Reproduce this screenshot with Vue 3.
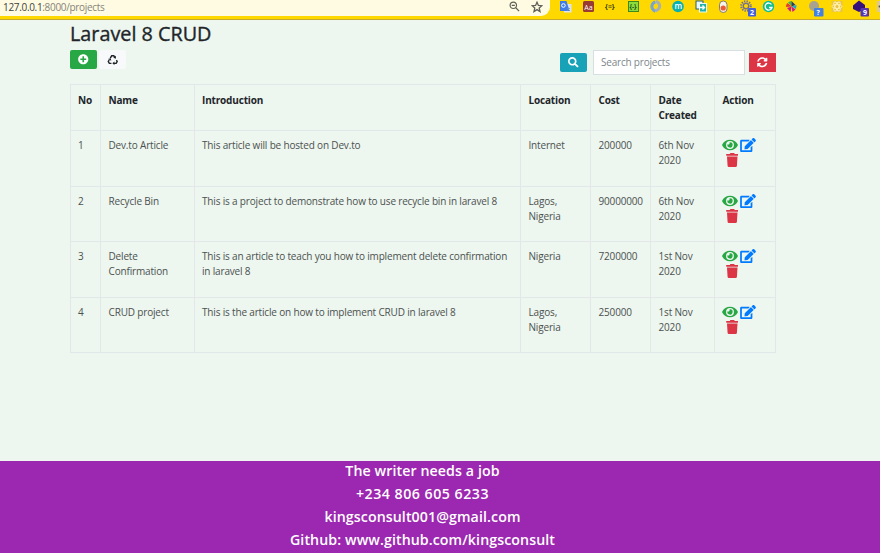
<script setup>
const columns = ['No', 'Name', 'Introduction', 'Location', 'Cost', 'Date Created', 'Action']
const projects = [
  { id: 1, name: 'Dev.to Article', intro: 'This article will be hosted on Dev.to', location: 'Internet', cost: '200000', date: '6th Nov 2020' },
  { id: 2, name: 'Recycle Bin', intro: 'This is a project to demonstrate how to use recycle bin in laravel 8', location: 'Lagos, Nigeria', cost: '90000000', date: '6th Nov 2020' },
  { id: 3, name: 'Delete Confirmation', intro: 'This is an article to teach you how to implement delete confirmation in laravel 8', location: 'Nigeria', cost: '7200000', date: '1st Nov 2020' },
  { id: 4, name: 'CRUD project', intro: 'This is the article on how to implement CRUD in laravel 8', location: 'Lagos, Nigeria', cost: '250000', date: '1st Nov 2020' },
]
</script>

<template>
  <div class="page">
    <header class="browser">
      <div class="address">
        <span class="url">127.0.0.1<span class="path">:8000/projects</span></span>
        <svg class="zoom" viewBox="0 0 12 12"><circle cx="4.7" cy="4.7" r="3.5" /><path d="M7.4 7.4L11 11M3 4.7h3.4" /></svg>
        <svg class="star" viewBox="0 0 12 12"><path d="M6 1.200l1.400 3.200 3.500.3-2.700 2.300.8 3.500-3-1.900-3 1.900.8-3.500L1.100 4.700l3.500-.3z" /></svg>
      </div>
      <svg class="extensions" viewBox="0 0 330 19">
        <g>
          <rect x="14" y="4" width="7.500" height="8.500" fill="#dce3ea" />
          <path d="M10 1h6.500l3 10H10z" fill="#3f7eea" />
          <circle cx="13.400" cy="5.500" r="1.800" fill="none" stroke="#fff" />
          <path d="M17 8l3 3M20 8l-3 3" stroke="#6f8fad" stroke-width=".8" />
        </g>
        <rect x="33" y="1" width="11" height="11" rx="1.500" fill="#983b32" />
        <text x="34.300" y="9.500" class="glyph" fill="#fff">Aa</text>
        <text x="55" y="9" class="glyph bold" fill="#333b00">{≡}</text>
        <rect x="78.500" y="1.500" width="10" height="10" fill="#8ddc3a" stroke="#3a8a20" />
        <text x="79.400" y="9.300" class="glyph bold small" fill="#20551c">{-}</text>
        <path d="M105.500 2a4.600 4.600 0 0 0-2 8l2 1.500" fill="none" stroke="#78a4d0" stroke-width="3" />
        <path d="M106 1.500a4.600 4.600 0 0 1 2 8l-2.500 1.500" fill="none" stroke="#a6b0b2" stroke-width="3" />
        <circle cx="128" cy="6.500" r="5.800" fill="#08b1b0" />
        <text x="124.600" y="9" class="glyph m" fill="#fff">m</text>
        <g>
          <rect x="146" y="1" width="7" height="8" fill="#e9f7f5" stroke="#285e68" />
          <rect x="149.500" y="3.500" width="7" height="8.500" fill="#20b2aa" stroke="#e9f7f5" />
          <path d="M149 7.500h5M152.500 5.500l2 2-2 2" fill="none" stroke="#fff" stroke-width="1.400" />
        </g>
        <rect x="169.500" y="1" width="7.500" height="11.500" rx="3.700" fill="#f5f5ec" stroke="#867c68" />
        <circle cx="173.200" cy="8" r="2.600" fill="#ed5a36" />
        <circle cx="196" cy="6" r="2.700" fill="none" stroke="#74708f" stroke-width="1.300" />
        <circle cx="196" cy="6" r="4.700" fill="none" stroke="#74708f" stroke-width="2.200" stroke-dasharray="1.300 1.160" />
        <rect x="198" y="8" width="8" height="8.500" rx="1" fill="#4361da" />
        <text x="200.100" y="15" class="badge">2</text>
        <circle cx="218.500" cy="6.500" r="5.700" fill="#14be91" />
        <path d="M221.500 4.500a3.500 3.500 0 1 0 .5 3h-3" fill="none" stroke="#fff" stroke-width="1.300" />
        <g>
          <path d="M241.500 6.500V1a5 5 0 0 0-3.500 1.500z" fill="#44b34d" />
          <path d="M241.500 6.500l-4-3.500a5 5 0 0 0-1.500 4z" fill="#e9362f" />
          <path d="M241.500 6.500l-4.500 1.500 3.500 4z" fill="#cf178c" />
          <path d="M241.500 6.500V1l4 4z" fill="#303a63" />
          <path d="M241.500 6.500l5-1.500-.5 4z" fill="#20a7ce" />
          <path d="M241.500 6.500l4 3-3 2.500z" fill="#cf178c" />
        </g>
        <circle cx="264" cy="6" r="5" fill="#a8a28e" />
        <rect x="264" y="8" width="9.500" height="8.500" rx="1" fill="#4381dc" />
        <text x="266.600" y="15" class="badge">?</text>
        <g fill="none" stroke="#fff3b0" stroke-width=".9">
          <rect x="281.500" y="1" width="11" height="11" fill="#e9c447" stroke="none" />
          <ellipse cx="287" cy="6.500" rx="5" ry="2" />
          <ellipse cx="287" cy="6.500" rx="5" ry="2" transform="rotate(60 287 6.500)" />
          <ellipse cx="287" cy="6.500" rx="5" ry="2" transform="rotate(120 287 6.500)" />
        </g>
        <path d="M303 5.500l6-5 6 4.500v4l-6 3-6-3z" fill="#36107c" />
        <rect x="310.500" y="8" width="8.500" height="8.500" rx="1" fill="#5735ae" />
        <text x="313" y="15" class="badge">9</text>
        <rect x="327" y="1" width="5" height="11" fill="#ddc79c" />
        <circle cx="329.500" cy="6.500" r="1" fill="#554" />
      </svg>
    </header>

    <main class="container">
      <h2>Laravel 8 CRUD</h2>
      <div class="toolbar">
        <button class="btn green" aria-label="Add">
          <svg viewBox="0 0 512 512"><path d="M256 8C119 8 8 119 8 256s111 248 248 248 248-111 248-248S393 8 256 8zm144 276c0 6.600-5.400 12-12 12h-92v92c0 6.600-5.400 12-12 12h-56c-6.600 0-12-5.400-12-12v-92h-92c-6.600 0-12-5.400-12-12v-56c0-6.600 5.400-12 12-12h92v-92c0-6.600 5.400-12 12-12h56c6.600 0 12 5.400 12 12v92h92c6.600 0 12 5.400 12 12v56z" /></svg>
        </button>
        <button class="btn light" aria-label="Recycle">
          <svg class="recycle" viewBox="0 0 24 24">
            <path d="M6.800 8.500L9.800 3.700h4.400l2 3.200M19.600 12.800l1.700 2.900-2.200 3.800h-4.600M9.300 19.500H4.900l-2.200-3.800 1.800-3.200" />
            <path class="tip" d="M18.600 3.600v6.200l-5.400-1.800zM15.500 15.800v7.400l-4.400-3.700zM2 10.400l5.700-1.600 1.300 5.400z" />
          </svg>
        </button>
        <span class="spacer"></span>
        <button class="btn teal" aria-label="Search">
          <svg viewBox="0 0 512 512"><path d="M505 442.700L405.300 343c-4.500-4.500-10.600-7-17-7H372c27.600-35.300 44-79.700 44-128C416 93.100 322.900 0 208 0S0 93.100 0 208s93.100 208 208 208c48.300 0 92.700-16.400 128-44v16.300c0 6.400 2.500 12.500 7 17l99.700 99.700c9.400 9.400 24.600 9.400 33.900 0l28.300-28.300c9.400-9.400 9.400-24.600.1-34zM208 336c-70.700 0-128-57.200-128-128 0-70.700 57.200-128 128-128 70.700 0 128 57.200 128 128 0 70.700-57.200 128-128 128z" /></svg>
        </button>
        <input type="text" placeholder="Search projects" />
        <button class="btn red" aria-label="Refresh">
          <svg viewBox="0 0 512 512"><path d="M370.720 133.280C339.458 104.008 298.888 87.962 255.848 88c-77.458.068-144.328 53.178-162.791 126.850-1.344 5.363-6.122 9.150-11.651 9.150H24.103c-7.498 0-13.194-6.807-11.807-14.176C33.933 94.924 134.813 8 256 8c66.448 0 126.791 26.136 171.315 68.685L463.030 40.970C478.149 25.851 504 36.559 504 57.941V192c0 13.255-10.745 24-24 24H345.941c-21.382 0-32.090-25.851-16.971-40.971l41.750-41.749zM32 296h134.059c21.382 0 32.090 25.851 16.971 40.971l-41.750 41.750c31.262 29.273 71.835 45.319 114.876 45.280 77.418-.07 144.315-53.144 162.787-126.849 1.344-5.363 6.122-9.150 11.651-9.150h57.304c7.498 0 13.194 6.807 11.807 14.176C478.067 417.076 377.187 504 256 504c-66.448 0-126.791-26.136-171.315-68.685L48.970 471.030C33.851 486.149 8 475.441 8 454.059V320c0-13.255 10.745-24 24-24z" /></svg>
        </button>
      </div>

      <table>
        <colgroup>
          <col class="c-no" /><col class="c-name" /><col class="c-intro" /><col class="c-loc" /><col class="c-cost" /><col class="c-date" /><col class="c-act" />
        </colgroup>
        <thead>
          <tr><th v-for="c in columns" :key="c">{{ c }}</th></tr>
        </thead>
        <tbody>
          <tr v-for="p in projects" :key="p.id">
            <td>{{ p.id }}</td>
            <td>{{ p.name }}</td>
            <td>{{ p.intro }}</td>
            <td>{{ p.location }}</td>
            <td>{{ p.cost }}</td>
            <td>{{ p.date }}</td>
            <td>
              <div class="actions">
                <svg class="eye" viewBox="0 0 576 512"><path d="M572.520 241.400C518.290 135.590 410.930 64 288 64S57.680 135.640 3.480 241.410a32.350 32.350 0 0 0 0 29.190C57.710 376.410 165.070 448 288 448s230.320-71.640 284.520-177.410a32.350 32.350 0 0 0 0-29.190zM288 400a144 144 0 1 1 144-144 143.930 143.930 0 0 1-144 144zm0-240a95.310 95.310 0 0 0-25.310 3.790 47.850 47.850 0 0 1-66.900 66.900A95.780 95.780 0 1 0 288 160z" /></svg>
                <svg class="edit" viewBox="0 0 576 512"><path d="M402.600 83.200l90.200 90.200c3.800 3.800 3.800 10 0 13.800L274.400 405.600l-92.800 10.300c-12.400 1.400-22.900-9.100-21.500-21.500l10.300-92.800L388.800 83.200c3.800-3.800 10-3.800 13.800 0zm162-22.900l-48.800-48.800c-15.200-15.200-39.900-15.200-55.200 0l-35.400 35.400c-3.800 3.800-3.800 10 0 13.800l90.200 90.200c3.800 3.800 10 3.800 13.800 0l35.400-35.400c15.200-15.300 15.200-40 0-55.200zM384 346.200V448H64V128h229.800c3.200 0 6.200-1.300 8.500-3.500l40-40c7.600-7.600 2.200-20.500-8.500-20.500H48C21.500 64 0 85.500 0 112v352c0 26.500 21.500 48 48 48h352c26.500 0 48-21.500 48-48V306.200c0-10.700-12.900-16-20.500-8.500l-40 40c-2.200 2.300-3.500 5.300-3.500 8.500z" /></svg>
                <svg class="trash" viewBox="0 0 448 512"><path d="M432 32H312l-9.400-18.700A24 24 0 0 0 281.100 0H166.800a23.720 23.720 0 0 0-21.400 13.300L136 32H16A16 16 0 0 0 0 48v32a16 16 0 0 0 16 16h416a16 16 0 0 0 16-16V48a16 16 0 0 0-16-16zM53.200 467a48 48 0 0 0 47.900 45h245.800a48 48 0 0 0 47.900-45L416 128H32z" /></svg>
              </div>
            </td>
          </tr>
        </tbody>
      </table>
    </main>

    <footer>
      <p>The writer needs a job</p>
      <p class="phone">+234 806 605 6233</p>
      <p>kingsconsult001@gmail.com</p>
      <p>Github: www.github.com/kingsconsult</p>
    </footer>
  </div>
</template>

<style>
body { margin: 0; overflow: hidden; }
</style>

<style scoped>
* { box-sizing: border-box; }
.page {
  width: 880px; height: 553px; display: flex; flex-direction: column; overflow: hidden;
  background: #edf6ef; color: #212529; font-family: "Open Sans", "Noto Sans", sans-serif; font-size: 10px;
}
.browser { height: 20px; flex: none; display: flex; background: #ffd800; border-bottom: 1px solid #c8a92c; }
.address { width: 550px; height: 16px; display: flex; align-items: center; background: #fffbe2; border-radius: 0 0 9px 0; flex: none; }
.url { width: 509px; padding-left: 3px; font-size: 10px; line-height: 14px; letter-spacing: -.32px; color: #3d3f3c; margin-top: -3px; }
.path { color: #85847a; }
.address svg { fill: none; stroke: #5e6058; stroke-width: 1.300; margin-top: -3px; }
.zoom { width: 11px; height: 11px; }
.star { width: 12px; height: 12px; margin-left: 11px; }
.extensions { width: 330px; height: 19px; flex: none; }
.glyph { font-size: 7px; }
.bold { font-weight: 700; }
.small { font-size: 6.500px; }
.m { font-size: 8px; font-weight: 600; }
.badge { font-size: 7px; font-weight: 700; fill: #fff; }
.container { width: 706px; margin-left: 70px; flex: 1; }
h2 { margin: 0; padding-top: 2px; font-size: 19.800px; line-height: 23px; font-weight: 500; letter-spacing: 0; -webkit-text-stroke: .35px #212529; }
.toolbar { display: flex; align-items: flex-start; height: 39px; padding-top: 5px; }
.btn { width: 27px; height: 19px; padding: 0; border: 0; border-radius: 2px; display: flex; align-items: center; justify-content: center; color: #fff; }
.btn svg { width: 10.500px; height: 10.500px; fill: currentColor; }
.green { background: #28a745; }
.light { background: #f8f9fa; color: #212529; margin-left: 2px; }
.btn .recycle { width: 11.500px; height: 11.500px; fill: none; stroke: currentColor; stroke-width: 3; }
.btn .recycle .tip { fill: currentColor; stroke: none; }
.spacer { flex: 1; }
.teal { background: #17a2b8; margin: 3px 6px 0 0; }
.red { background: #dc3545; border-radius: 0; margin: 3px 0 0 4px; }
input { width: 152px; height: 25px; margin: 0; padding: 0 7px 1px; border: 1px solid #d8dfe2; border-radius: 0; background: #fff; font: inherit; letter-spacing: -.2px; outline: none; }
input::placeholder { color: #7d868c; opacity: 1; }
table { width: 705px; margin-left: -.5px; table-layout: fixed; border-collapse: collapse; letter-spacing: -.17px; line-height: 15.300px; }
th, td { border: 1px solid #e2e7e9; padding: 8px 7.500px 0; vertical-align: top; text-align: left; }
th { height: 46px; font-weight: 700; }
td { height: 55.500px; padding-top: 7.200px; color: #4c514f; }
.c-no { width: 30.500px; }
.c-name { width: 93.500px; }
.c-intro { width: 326.500px; }
.c-loc { width: 70px; }
.c-cost { width: 60px; }
.c-date { width: 64px; }
.c-act { width: 60.500px; }
.actions { display: flex; flex-wrap: wrap; width: 40px; gap: 0 2px; margin-left: -.7px; }
.actions svg { height: 14px; margin-bottom: 1px; }
.eye { width: 16px; fill: #28a745; }
.edit { width: 16px; fill: #007bff; }
.trash { width: 12.500px; margin-left: 4px; fill: #dc3545; }
footer { height: 92.500px; width: 880px; flex: none; padding-right: 35px; background: #9c27b0; color: #fff; font-size: 14.200px; font-weight: 600; text-align: center; line-height: 23.200px; letter-spacing: .09px; }
footer p { margin: 0; }
footer p:first-child { margin-top: -2px; }
.phone { letter-spacing: .5px; }
</style>
